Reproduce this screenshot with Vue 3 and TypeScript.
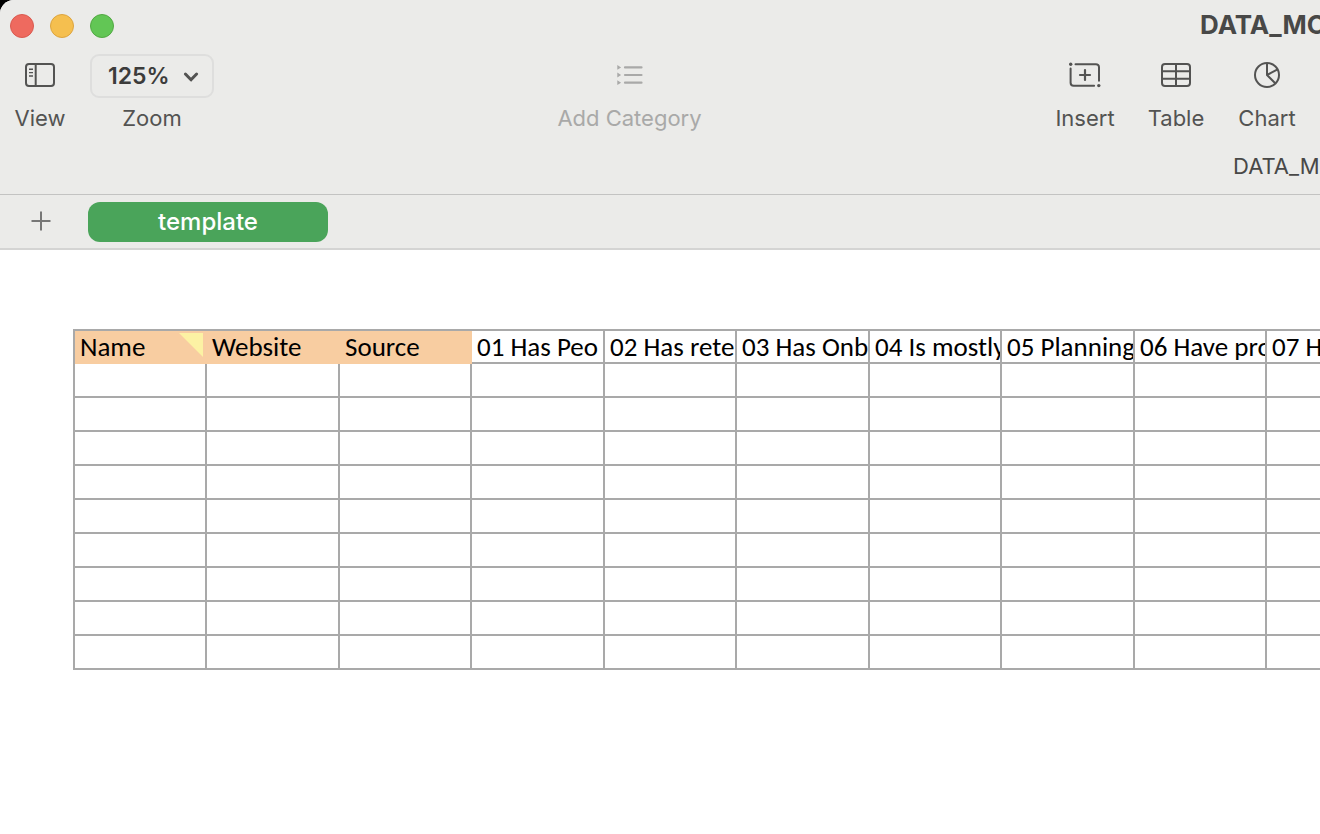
<script setup lang="ts">
import { ref } from 'vue'

interface Column {
  title: string
  tinted?: boolean
  note?: boolean
}

const zoom = ref('125%')
const columns: Column[] = [
  { title: 'Name', tinted: true, note: true },
  { title: 'Website', tinted: true },
  { title: 'Source', tinted: true },
  { title: '01 Has Peo' },
  { title: '02 Has rete' },
  { title: '03 Has Onb' },
  { title: '04 Is mostly' },
  { title: '05 Planning' },
  { title: '06 Have pro' },
  { title: '07 H' },
]
const rowCount = 9
</script>

<template>
  <div class="window">
    <header class="chrome">
      <div class="titlebar">
        <div class="lights">
          <button class="light close" type="button" aria-label="Close"></button>
          <button class="light minimise" type="button" aria-label="Minimise"></button>
          <button class="light full" type="button" aria-label="Full screen"></button>
        </div>
        <h1 class="title">DATA_MO</h1>
      </div>

      <div class="toolbar">
        <div class="group start">
          <button class="tool view" type="button">
            <span class="icon">
              <svg width="32" height="26" viewBox="0 0 32 26" fill="none" stroke="currentColor">
                <rect x="2" y="2" width="28" height="22" rx="3" stroke-width="2" />
                <path d="M11.7 2v22" stroke-width="2" />
                <path d="M5 7.2h4M5 10.6h4M5 14h4" stroke-width="1.4" />
              </svg>
            </span>
            <span>View</span>
          </button>
          <div class="tool zoom">
            <div class="picker">
              <select id="zoom-level" v-model="zoom">
                <option>125%</option>
              </select>
              <svg class="chevron" width="16" height="12" viewBox="0 0 16 12" fill="none" stroke="currentColor" stroke-width="3" stroke-linecap="round" stroke-linejoin="round">
                <path d="M2.4 3l5.6 5.8L13.6 3" />
              </svg>
            </div>
            <label for="zoom-level">Zoom</label>
          </div>
        </div>

        <button class="tool category" type="button" disabled>
          <span class="icon">
            <svg width="28" height="22" viewBox="0 0 28 22" fill="currentColor">
              <path d="M1.3 1l3.8 2.4-3.8 2.4zM1.3 8.6L5.1 11l-3.8 2.4zM1.3 16.3l3.8 2.4-3.8 2.4z" />
              <path d="M9 3.4h16.5M9 11h16.5M9 18.7h16.5" stroke="currentColor" stroke-width="2.2" stroke-linecap="round" />
            </svg>
          </span>
          <span>Add Category</span>
        </button>

        <div class="group end">
          <button class="tool wide" type="button">
            <span class="icon">
              <svg width="34" height="28" viewBox="0 0 34 28" fill="none" stroke="currentColor" stroke-width="2" stroke-linecap="round">
                <path d="M7.5 3.2H28a3 3 0 0 1 3 3v13.5M2.6 7.5v14.3a3 3 0 0 0 3 3h20.5" />
                <path d="M12 14h10M17 9v10" stroke-width="2.2" />
                <circle cx="2.7" cy="3.2" r="1.7" fill="currentColor" stroke="none" />
                <circle cx="30.8" cy="24.6" r="1.7" fill="currentColor" stroke="none" />
              </svg>
            </span>
            <span>Insert</span>
          </button>
          <button class="tool wide" type="button">
            <span class="icon">
              <svg width="32" height="26" viewBox="0 0 32 26" fill="none" stroke="currentColor" stroke-width="2">
                <rect x="2" y="2" width="28" height="22" rx="3" />
                <path d="M16 2v22M2 9.3h28M2 16.7h28" />
              </svg>
            </span>
            <span>Table</span>
          </button>
          <button class="tool wide" type="button">
            <span class="icon">
              <svg width="28" height="28" viewBox="0 0 28 28" fill="none" stroke="currentColor" stroke-width="2">
                <circle cx="14" cy="14" r="12" />
                <path d="M14 2v12l8.5 8.5M14 14l10.6-5.6" stroke-linejoin="round" />
              </svg>
            </span>
            <span>Chart</span>
          </button>
        </div>
      </div>

      <div class="docname"><span>DATA_M</span></div>
    </header>

    <nav class="tabs">
      <button class="add" type="button" aria-label="Add sheet">
        <svg width="20" height="20" viewBox="0 0 20 20" stroke="currentColor" stroke-width="2">
          <path d="M0.5 10h19M10 0.5v19" />
        </svg>
      </button>
      <button class="tab" type="button">template</button>
    </nav>

    <main class="canvas">
      <table class="sheet">
        <thead>
          <tr>
            <th v-for="col in columns" :key="col.title" scope="col" :class="{ tinted: col.tinted }">
              <div class="cell">{{ col.title }}</div>
              <svg v-if="col.note" class="note" width="24" height="24" viewBox="0 0 24 24">
                <path d="M0 0h24v24z" fill="#fcf2a4" />
              </svg>
            </th>
          </tr>
        </thead>
        <tbody>
          <tr v-for="r in rowCount" :key="r">
            <td v-for="col in columns" :key="col.title"></td>
          </tr>
        </tbody>
      </table>
    </main>
  </div>
</template>

<style>
body {
  margin: 0;
  background: #000;
}
</style>

<style scoped>
.window {
  min-height: 100vh;
  display: flex;
  flex-direction: column;
  overflow: hidden;
  border-top-left-radius: 14px;
  background: #fff;
  font-family: Inter, "Liberation Sans", sans-serif;
  font-size: 22px;
  line-height: 28px;
  color: #535352;
}

button,
select {
  margin: 0;
  padding: 0;
  border: 0;
  background: none;
  font: inherit;
  color: inherit;
}

.chrome {
  background: #ebebe9;
  border-bottom: 1px solid #c3c3c2;
}

.titlebar {
  display: flex;
  align-items: center;
  justify-content: space-between;
  height: 52px;
  padding-left: 10px;
}

.lights {
  display: flex;
  gap: 16px;
}

.light {
  box-sizing: border-box;
  width: 24px;
  height: 24px;
  border: 1px solid;
  border-radius: 50%;
}

.close {
  background: #ee6a5f;
  border-color: #d95a50;
}

.minimise {
  background: #f5bf4f;
  border-color: #dca43f;
}

.full {
  background: #62c655;
  border-color: #52a843;
}

.title {
  width: 120px;
  margin: 0;
  padding-bottom: 2px;
  overflow: hidden;
  white-space: nowrap;
  font-size: 26px;
  font-weight: 700;
  line-height: 32px;
  color: #484847;
}

.toolbar {
  display: flex;
  justify-content: space-between;
  padding: 2px 13px 0 15px;
}

.group {
  display: flex;
}

.start {
  gap: 25px;
}

.end {
  gap: 11px;
}

.tool {
  display: flex;
  flex-direction: column;
  align-items: center;
  gap: 6px;
  white-space: nowrap;
}

.view {
  width: 50px;
}

.wide {
  width: 80px;
}

.category {
  color: #a9a9a8;
}

.icon {
  box-sizing: border-box;
  display: flex;
  align-items: center;
  justify-content: center;
  height: 44px;
  padding-bottom: 2px;
}

.icon svg {
  display: block;
}

.picker {
  position: relative;
  display: flex;
  width: 124px;
  height: 44px;
}

.picker select {
  box-sizing: border-box;
  width: 100%;
  padding: 0 36px 0 16px;
  border: 2px solid #dededd;
  border-radius: 9px;
  appearance: none;
  font-size: 23px;
  font-weight: 600;
  color: #3c3c3b;
}

.chevron {
  position: absolute;
  right: 15px;
  top: 17px;
  pointer-events: none;
}

.docname {
  display: flex;
  justify-content: flex-end;
  padding: 20px 0 14px;
  color: #484847;
}

.docname span {
  width: 87px;
  overflow: hidden;
  white-space: nowrap;
}

.tabs {
  display: flex;
  align-items: center;
  height: 53px;
  padding-left: 31px;
  gap: 37px;
  background: #ebebe9;
  border-bottom: 2px solid #d4d4d3;
}

.add {
  display: flex;
  padding-bottom: 2px;
  color: #777776;
}

.tab {
  width: 240px;
  height: 40px;
  border-radius: 12px;
  background: #4aa45a;
  color: #fff;
  font-size: 24px;
  font-weight: 500;
}

.canvas {
  flex: 1;
  padding: 79px 0 79px 73px;
  overflow: hidden;
}

.sheet {
  table-layout: fixed;
  width: 1327px;
  border-collapse: separate;
  border-spacing: 0;
  border: solid #a9a9a9;
  border-width: 2px 0 0 2px;
  color: #000;
  font-family: Carlito, Lato, "Liberation Sans", sans-serif;
  font-size: 27px;
}

th,
td {
  box-sizing: border-box;
  height: 34px;
  padding: 0;
  border: solid #a9a9a9;
  border-width: 0 2px 2px 0;
}

th {
  position: relative;
  width: 132px;
  height: 33px;
  font-weight: 400;
  text-align: left;
}

th:nth-child(even) {
  width: 133px;
}

.tinted {
  background: #f8cda1;
  border-color: #f8cda1;
}

.cell {
  height: 31px;
  padding-left: 5px;
  overflow: hidden;
  white-space: nowrap;
  line-height: 32px;
}

.note {
  position: absolute;
  top: 2px;
  right: 2px;
}
</style>
